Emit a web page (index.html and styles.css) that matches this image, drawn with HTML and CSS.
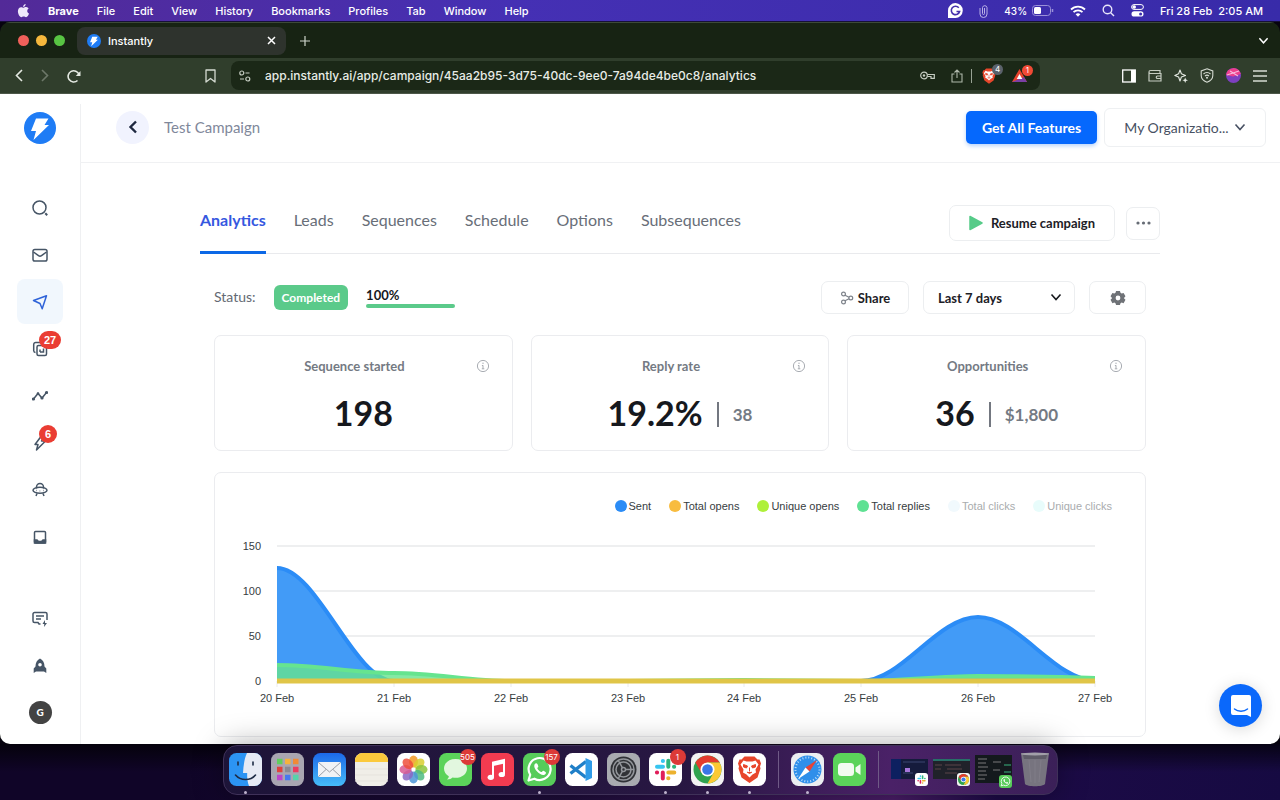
FILE: index.html
```html
<!DOCTYPE html>
<html lang="en">
<head>
  <meta charset="UTF-8">
  <meta name="viewport" content="width=device-width, initial-scale=1.0">
  <title>Instantly</title>
  <link rel="stylesheet" href="styles.css">
</head>
<body>

<!-- Shared icons -->
<svg class="defs" aria-hidden="true">
  <symbol id="bolt" viewBox="0 0 32 32">
    <circle cx="16" cy="16" r="16" fill="#1f7cf5"/>
    <path d="M12 6.500h12.500l-4 6.500h4.500L9.500 28l2.500-9H7z" fill="#fff"/>
  </symbol>
  <symbol id="info" viewBox="0 0 14 14">
    <g fill="none" stroke="#a9adb3"><circle cx="7" cy="7" r="5.600"/><path d="M7 6.300v3.500M5.900 6.500H7M5.800 9.800h2.500"/></g>
    <circle cx="7" cy="4.300" r=".7" fill="#a9adb3"/>
  </symbol>
  <symbol id="chevron" viewBox="0 0 12 12">
    <path d="M1.500 3.500 6 8.500l4.500-5" fill="none" stroke="currentColor" stroke-width="1.600"/>
  </symbol>
  <symbol id="slack" viewBox="0 0 33 33">
    <rect width="33" height="33" rx="7.500" fill="#fff"/>
    <g stroke-width="4" stroke-linecap="round" fill="none">
      <path d="M8 13.800h6M13.800 8h.2" stroke="#37c5f0"/>
      <path d="M19.300 7.800v6M25 13.800h.2" stroke="#2fb67c"/>
      <path d="M19.300 19.500h6M19.200 25.300h.2" stroke="#ecb22e"/>
      <path d="M13.800 19.500v6M7.900 19.500h.2" stroke="#e01e5a"/>
    </g>
  </symbol>
  <symbol id="chrome" viewBox="0 0 33 33">
    <rect width="33" height="33" rx="7.500" fill="#f3f3f3"/>
    <circle cx="16.500" cy="16.500" r="14" fill="#2fa34f"/>
    <path d="M4.400 9.500A14 14 0 0 1 28.600 9.500H16.500l-6 10.500z" fill="#e33b2e"/>
    <path d="M28.600 9.500A14 14 0 0 1 16.500 30.500l6-10.500-6-10.500z" fill="#fcc934"/>
    <circle cx="16.500" cy="16.500" r="7" fill="#fff"/><circle cx="16.500" cy="16.500" r="5.300" fill="#3a76e8"/>
  </symbol>
  <symbol id="whatsapp" viewBox="0 0 33 33">
    <rect width="33" height="33" rx="7.500" fill="#57cc5a"/>
    <path d="M5.500 27.500l1.700-5.800a11 11 0 1 1 4.200 4z" fill="none" stroke="#fff" stroke-width="2.200" stroke-linejoin="round"/>
    <path d="M12.500 10.500c-2 1.200-1.600 4.600 1.600 8s6.800 4.600 8.600 2.200c.8-1.300 0-1.700-2.300-2.900-.9-.3-1.300 1.500-2.200 1.300-1.600-.7-3.200-2.200-3.900-3.800-.2-.8 1.300-1.100 1-2.100-.9-2.500-1.300-3.200-2.800-2.700z" fill="#fff"/>
  </symbol>
  <symbol id="lion" viewBox="0 0 24 28">
    <path d="M7 1h10l3 3h2l1.500 4-1 3 .5 2-3 9L12 27.500 4 22 1 13l.5-2-1-3L2 4h2z" fill="#e8462b"/>
    <path d="M6 5l3 1h6l3-1 3 4-3 5 .5 3-3.500 2-3 3-3-3-3.500-2L6 14 3 9z" fill="#fff"/>
    <path d="M6 9l4 1.500-1 2-3-1zM18 9l-4 1.500 1 2 3-1zM12 12v4M9.500 16.500l2.500 1.500 2.500-1.500" fill="#e8462b" stroke="#e8462b"/>
  </symbol>
</svg>

<header class="menubar">
  <nav class="menus">
    <svg class="apple" viewBox="0 0 14 16"><path d="M9.500 0c.1 1.800-1.300 3.300-2.900 3.300C6.400 1.700 8 .2 9.500 0zM7 4.300c.8 0 1.700-.9 3.200-.8 1.200.1 2.100.6 2.700 1.500-2.400 1.500-2 4.800.5 5.800-.7 1.900-2 4.200-3.500 4.200-1 0-1.500-.7-2.700-.7s-1.700.7-2.700.7C2.600 15 .6 11.500.6 8.400c0-3 1.800-4.800 3.700-4.800 1.200 0 2 .7 2.700.7z" fill="#eee9fa"/></svg>
    <b>Brave</b>
    <span>File</span><span>Edit</span><span>View</span><span>History</span><span>Bookmarks</span><span>Profiles</span><span>Tab</span><span>Window</span><span>Help</span>
  </nav>
  <div class="tray">
    <svg width="15" height="15" viewBox="0 0 15 15"><path d="M7.500 0A7.500 7.500 0 1 1 7 15H0V7.500A7.500 7.500 0 0 1 7.500 0z" fill="#fff"/><path d="M10.800 4.800a4.200 4.200 0 1 0 .8 3.700H8.500" fill="none" stroke="#4530ab" stroke-width="1.600"/></svg>
    <svg width="9" height="14" viewBox="0 0 9 14"><path d="M5.500 4v5.500a1 1 0 0 1-2 0V3.500a2.300 2.300 0 0 1 4.500 0V10a3.500 3.500 0 0 1-7 0V4" fill="none" stroke="#b9b1e6"/></svg>
    <span class="battery">43%
      <svg width="22" height="11" viewBox="0 0 22 11"><rect x=".5" y=".5" width="18" height="10" rx="3" fill="none" stroke="#9a90d8"/><rect x="2" y="2" width="7" height="7" rx="1.500" fill="#fff"/><path d="M20.500 4v3" stroke="#9a90d8" stroke-width="1.500"/></svg>
    </span>
    <svg width="16" height="12" viewBox="0 0 16 12"><g fill="none" stroke="#fff" stroke-width="1.800"><path d="M1 4.500a10 10 0 0 1 14 0M3.500 7.200a6.400 6.400 0 0 1 9 0"/></g><path d="M5.600 9.300a3.500 3.500 0 0 1 4.800 0L8 11.800z" fill="#fff"/></svg>
    <svg width="13" height="13" viewBox="0 0 13 13"><g fill="none" stroke="#e9e6fa" stroke-width="1.400"><circle cx="5.500" cy="5.500" r="4.300"/><path d="M8.700 8.700 12 12"/></g></svg>
    <svg width="13" height="13" viewBox="0 0 13 13"><rect x=".6" y=".6" width="11.800" height="4.800" rx="2.400" fill="none" stroke="#fff"/><circle cx="3.200" cy="3" r="1.800" fill="#fff"/><rect x=".5" y="7.200" width="12" height="5.400" rx="2.700" fill="#fff"/><circle cx="9.600" cy="9.900" r="1.500" fill="#3b2cae"/></svg>
    <time>Fri 28 Feb&nbsp; 2:05 AM</time>
  </div>
</header>

<div class="window">
  <div class="tabstrip">
    <span class="light red"></span><span class="light yellow"></span><span class="light green"></span>
    <div class="tab">
      <svg width="14" height="14"><use href="#bolt"/></svg>
      <span>Instantly</span>
      <button aria-label="Close tab"><svg width="9" height="9" viewBox="0 0 9 9"><path d="M1 1l7 7M8 1 1 8" stroke="#fff" stroke-width="1.500"/></svg></button>
    </div>
    <button class="newtab" aria-label="New tab"><svg width="10" height="10" viewBox="0 0 10 10"><path d="M5 0v10M0 5h10" stroke="#cfd5cc" stroke-width="1.200"/></svg></button>
    <button class="tablist" aria-label="Search tabs"><svg width="11" height="11"><use href="#chevron"/></svg></button>
  </div>

  <div class="toolbar">
    <div class="history">
      <button aria-label="Back"><svg width="8" height="13" viewBox="0 0 8 13"><path d="M7 1 1.500 6.500 7 12" fill="none" stroke="#e4e9e2" stroke-width="1.600"/></svg></button>
      <button aria-label="Forward"><svg width="8" height="13" viewBox="0 0 8 13"><path d="M1 1l5.500 5.500L1 12" fill="none" stroke="#6d7869" stroke-width="1.600"/></svg></button>
      <button aria-label="Reload"><svg width="15" height="14" viewBox="0 0 15 14"><path d="M10.500 11.500A5.600 5.600 0 1 1 12 5.500" fill="none" stroke="#e4e9e2" stroke-width="1.600"/><path d="M13.500 2v5H8.800z" fill="#e4e9e2"/></svg></button>
    </div>
    <button class="bookmark" aria-label="Bookmark"><svg width="11" height="14" viewBox="0 0 11 14"><path d="M1 1h9v12L5.500 9.500 1 13z" fill="none" stroke="#d5dbd2" stroke-width="1.300" stroke-linejoin="round"/></svg></button>
    <div class="address">
      <svg width="12" height="12" viewBox="0 0 12 12"><g fill="none" stroke="#c5ccc1" stroke-width="1.200"><circle cx="2.800" cy="3" r="2"/><path d="M6.500 3h4M1 9h4"/><circle cx="8.800" cy="9" r="2"/></g></svg>
      <input type="text" aria-label="Address" value="app.instantly.ai/app/campaign/45aa2b95-3d75-40dc-9ee0-7a94de4be0c8/analytics">
      <svg width="15" height="9" viewBox="0 0 15 9"><g fill="none" stroke="#c5ccc1" stroke-width="1.200"><circle cx="4" cy="4.500" r="3.300"/><path d="M7.300 3.500h7v3.800H11V5.500H7.500"/></g><circle cx="4" cy="4.500" r="1.200" fill="#c5ccc1"/></svg>
      <svg class="share-page" width="12" height="14" viewBox="0 0 12 14"><path d="M3.500 5H1v8h10V5H8.500M6 9V1M3.500 3.500 6 1l2.500 2.500" fill="none" stroke="#aeb7aa" stroke-width="1.100"/></svg>
      <i class="bar"></i>
      <button class="ext" aria-label="Shields"><svg width="14" height="16"><use href="#lion"/></svg><span class="ext-count grey">4</span></button>
      <button class="ext" aria-label="Rewards"><svg width="15" height="13" viewBox="0 0 15 13"><path d="M7.500 0 15 13H0z" fill="#e8432d"/><path d="M0 13h15l-3-5z" fill="#7a3fa5"/><path d="M7.500 5l2.800 5H4.700z" fill="#fff"/></svg><span class="ext-count">1</span></button>
    </div>
    <div class="tools">
      <svg width="14" height="14" viewBox="0 0 14 14"><rect x=".7" y="1" width="12.600" height="12" fill="none" stroke="#fff" stroke-width="1.300"/><path d="M9 1h4v12H9z" fill="#fff"/></svg>
      <svg width="14" height="14" viewBox="0 0 14 14"><g fill="none" stroke="#c5ccc1" stroke-width="1.200"><path d="M12 4V1.500H2.500a1.500 1.500 0 0 0 0 3H13V12H1V3"/><path d="M13 7H9.500a1.200 1.200 0 0 0 0 2.500H13"/></g></svg>
      <svg width="14" height="14" viewBox="0 0 14 14"><path d="M6 1l1.400 3.800L11.500 6.500 7.400 8 6 12 4.600 8 .8 6.500l3.800-1.700z" fill="none" stroke="#e4e9e2" stroke-width="1.100" stroke-linejoin="round"/><path d="M11.200 8.500l.8 2 2 .8-2 .7-.8 2-.8-2-2-.7 2-.8z" fill="#e4e9e2"/></svg>
      <svg width="14" height="15" viewBox="0 0 14 15"><g fill="none" stroke="#d5dbd2" stroke-width="1.100"><path d="M7 .8 12.800 3v4.500c0 3-2.500 5.500-5.800 6.700C3.700 13 1.200 10.500 1.200 7.500V3z"/><path d="M3.500 6a5 5 0 0 1 7 0M5 8a3 3 0 0 1 4 0"/></g><circle cx="7" cy="9.800" r="1" fill="#d5dbd2"/></svg>
      <svg width="15" height="15" viewBox="0 0 15 15"><circle cx="7.500" cy="7.500" r="7.500" fill="#7d3fc0"/><path d="M0 7a7.500 7.500 0 0 1 14.800-1L7 8.500z" fill="#ec3f8c"/><path d="M1 7l12-4M4 3l8 5" stroke="#f7b6dc" stroke-width="1.200"/></svg>
      <svg width="14" height="12" viewBox="0 0 14 12"><path d="M0 1h14M0 6h14M0 11h14" stroke="#d5dbd2" stroke-width="1.300"/></svg>
    </div>
  </div>

  <div class="page">
    <aside class="sidebar">
      <a class="logo" href="#" aria-label="Instantly"><svg viewBox="0 0 32 32"><use href="#bolt"/></svg></a>
      <a href="#" aria-label="Search"><svg viewBox="0 0 16 16"><circle cx="7.500" cy="7.500" r="6.500"/><path d="M13.300 13.300l1.900 1.900" stroke-width="2"/></svg></a>
      <a href="#" aria-label="Accounts"><svg viewBox="0 0 16 16"><rect x="1" y="2.500" width="14" height="11.500" rx="1.800"/><path d="M1.500 5l5 3.700a2.500 2.500 0 0 0 3 0l5-3.700"/></svg></a>
      <a class="current" href="#" aria-label="Campaigns"><svg viewBox="0 0 16 16"><path d="M1.500 6.500 14.500 1.800 10.200 14.800 8 9.500z" stroke-linejoin="round"/></svg></a>
      <a href="#" aria-label="Inbox"><svg viewBox="0 0 16 16"><path d="M3.500 11.500A2 2 0 0 1 1.700 9.700V3.500a2 2 0 0 1 2-2H10a2 2 0 0 1 2 2"/><rect x="5" y="4.500" width="9.500" height="10" rx="1.500"/><path d="M8 11V8.500M11.500 7.500V11H8"/></svg><span class="count">27</span></a>
      <a href="#" aria-label="Analytics"><svg viewBox="0 0 16 16"><path d="M1.500 11 6 5.500l4 4.500 4.500-5.500"/><g class="solid" stroke="none"><circle cx="1.500" cy="11" r="1.600"/><circle cx="6" cy="5.500" r="1.300"/><circle cx="10" cy="10" r="1.600"/><circle cx="14.500" cy="4.500" r="1.600"/></g></svg></a>
      <a href="#" aria-label="Accelerator"><svg viewBox="0 0 16 16"><path d="M9 1.500 3 9.500h3L4.500 15l9-9H9.500L12 1.500z" stroke-linejoin="round"/></svg><span class="count">6</span></a>
      <a href="#" aria-label="Copilot"><svg viewBox="0 0 16 16"><path d="M4.500 6.500V5a3.500 3.500 0 0 1 7 0v1.500"/><ellipse cx="8" cy="8.300" rx="7" ry="3"/><path d="M5 11.500 4 14M11 11.500l1 2.500M4.500 8.500h.5M7.700 9h.5M11 8.500h.5"/></svg></a>
      <a href="#" aria-label="Templates"><svg viewBox="0 0 16 16"><rect x="2.500" y="2.500" width="11" height="11.500" rx="1"/><path class="solid" d="M2.500 11H5l1.500 1.500h3L11 11h2.500v3h-11z"/></svg></a>
      <a class="lower" href="#" aria-label="Feedback"><svg viewBox="0 0 16 16"><path d="M8.500 13H7l-1-1.500H2.500a1.500 1.500 0 0 1-1.500-1.500V3a1.500 1.500 0 0 1 1.500-1.500h11A1.500 1.500 0 0 1 15 3v6M4 5h8M4 8h5"/><path class="solid" d="M13 9l-2.500 4h1.800L12 16l3-4h-2z" stroke="none"/></svg></a>
      <a href="#" aria-label="Getting started"><svg viewBox="0 0 16 16"><path class="solid" fill-rule="evenodd" stroke="none" d="M8 .5c3.200 1.700 4.500 4.500 4.500 8l1.800 2v4.500l-2.300-1.500H4L1.700 15v-4.500l1.800-2C3.500 5 4.800 2.200 8 .5zM8 5a1.800 1.800 0 1 0 0 3.600A1.800 1.800 0 0 0 8 5z"/></svg></a>
      <a href="#" aria-label="Profile"><span class="avatar">G</span></a>
    </aside>

    <main>
      <div class="topbar">
        <button class="back" aria-label="Back to campaigns"><svg width="10" height="14" viewBox="0 0 10 14"><path d="M8 1.500 2.500 7 8 12.500" fill="none" stroke="#1f2940" stroke-width="2.400"/></svg></button>
        <span class="crumb">Test Campaign</span>
        <button class="upgrade">Get All Features</button>
        <button class="org">My Organizatio... <svg width="12" height="12"><use href="#chevron"/></svg></button>
      </div>

      <div class="content">
        <div class="tabs">
          <a class="active" href="#">Analytics</a>
          <a href="#">Leads</a>
          <a href="#">Sequences</a>
          <a href="#">Schedule</a>
          <a href="#">Options</a>
          <a href="#">Subsequences</a>
          <div class="tab-actions">
            <button class="resume"><svg width="14" height="16" viewBox="0 0 14 16"><path d="M1 1.500 13 8 1 14.500z" fill="#56cb88" stroke="#56cb88" stroke-width="1.500" stroke-linejoin="round"/></svg>Resume campaign</button>
            <button class="more" aria-label="More"><svg width="15" height="4" viewBox="0 0 15 4"><g fill="#666c75"><circle cx="2" cy="2" r="1.600"/><circle cx="7.500" cy="2" r="1.600"/><circle cx="13" cy="2" r="1.600"/></g></svg></button>
          </div>
        </div>

        <div class="panel">
          <div class="status">
            <span class="status-label">Status:</span>
            <span class="pill">Completed</span>
            <div class="progress"><b>100%</b><span></span></div>
            <div class="filters">
              <button class="share"><svg width="14" height="14" viewBox="0 0 14 14"><g fill="none" stroke="#7d828a" stroke-width="1.200"><circle cx="3.500" cy="3" r="1.900"/><circle cx="3.500" cy="11" r="1.900"/><circle cx="10.800" cy="7" r="1.900"/><path d="M5 4.300 9 6.300M5 9.800l4-2"/></g></svg>Share</button>
              <div class="range">
                <select aria-label="Date range"><option>Last 7 days</option><option>Last 4 weeks</option></select>
                <svg width="12" height="12"><use href="#chevron"/></svg>
              </div>
              <button class="settings" aria-label="Settings"><svg width="16" height="16" viewBox="0 0 18 18"><path fill="#6f7277" fill-rule="evenodd" d="M6.800 1h4.400l.6 2.200 1.300.7 2.200-.6 2.100 3.700-1.500 1.600v1l1.500 1.500-2.100 3.700-2.200-.6-1.300.7-.6 2.100H6.800l-.6-2.100-1.300-.7-2.200.6-2.100-3.700 1.500-1.500v-1L.6 7l2.100-3.700 2.200.6 1.300-.7zM9 6.300a2.700 2.700 0 1 0 0 5.400 2.700 2.700 0 0 0 0-5.400z"/></svg></button>
            </div>
          </div>

          <div class="stats">
            <section class="card">
              <h3>Sequence started</h3><svg class="info"><use href="#info"/></svg>
              <p><strong>198</strong></p>
            </section>
            <section class="card">
              <h3>Reply rate</h3><svg class="info"><use href="#info"/></svg>
              <p><strong>19.2%</strong><i></i><span>38</span></p>
            </section>
            <section class="card">
              <h3>Opportunities</h3><svg class="info"><use href="#info"/></svg>
              <p><strong>36</strong><i></i><span>$1,800</span></p>
            </section>
          </div>

          <section class="card chart">
            <ul class="legend">
              <li class="sent">Sent</li>
              <li class="opens">Total opens</li>
              <li class="unique">Unique opens</li>
              <li class="replies">Total replies</li>
              <li class="off clicks">Total clicks</li>
              <li class="off uclicks">Unique clicks</li>
            </ul>
            <svg class="plot" viewBox="0 0 930 190" role="img" aria-label="Campaign activity by day">
              <g stroke="#e9eaec" stroke-width="1.500">
                <path d="M62 26h818M62 71h818M62 116h818"/>
                <path d="M62 161v6M179 161v6M296 161v6M413 161v6M529 161v6M646 161v6M763 161v6M880 161v6" stroke-width="1"/>
              </g>
              <clipPath id="area"><path d="M62 0h818v164H62z"/></clipPath>
              <g clip-path="url(#area)" stroke-width="4">
                <path d="M60 48H62C102 48 139 161 179 161H646C687 161 722 97 763 97S839 161 882 161V163H60z" fill="#429bf7"/>
                <path d="M60 48H62C102 48 139 161 179 161H646C687 161 722 97 763 97S839 161 882 161" fill="none" stroke="#2b8cf6"/>
                <path d="M60 145H62C103 145 138 153 179 153S255 161 296 161H413L529 160 646 161C687 161 722 156 763 156S839 157 882 158V163H60z" fill="#66e48f" fill-opacity=".8"/>
                <path d="M60 145H62C103 145 138 153 179 153S255 161 296 161H413L529 160 646 161C687 161 722 156 763 156S839 157 882 158" fill="none" stroke="#66e48f"/>
                <path d="M60 161h822" stroke="#e0c548" stroke-width="5"/>
              </g>
              <g class="axis" text-anchor="end"><text x="46" y="30">150</text><text x="46" y="75">100</text><text x="46" y="120">50</text><text x="46" y="165">0</text></g>
              <g class="axis" text-anchor="middle">
                <text x="62" y="182">20 Feb</text><text x="179" y="182">21 Feb</text><text x="296" y="182">22 Feb</text><text x="413" y="182">23 Feb</text>
                <text x="529" y="182">24 Feb</text><text x="646" y="182">25 Feb</text><text x="763" y="182">26 Feb</text><text x="880" y="182">27 Feb</text>
              </g>
            </svg>
          </section>
        </div>
      </div>
    </main>
    <button class="chat" aria-label="Open chat"><svg width="20" height="22" viewBox="0 0 20 22"><path d="M2 0h16a2 2 0 0 1 2 2v20l-4-2H2a2 2 0 0 1-2-2V2a2 2 0 0 1 2-2z" fill="#fff"/><path d="M3.500 14c3.500 3 9.500 3 13 0" fill="none" stroke="#0a68fb" stroke-width="1.500" stroke-linecap="round"/></svg></button>
  </div>
</div>

<footer class="desktop">
  <div class="dock">
    <div class="app open"><svg viewBox="0 0 33 33"><rect width="33" height="33" rx="7.500" fill="#2c94f3"/><path d="M18 0h7.500A7.500 7.500 0 0 1 33 7.500v18a7.500 7.500 0 0 1-7.500 7.500H20c-1.500-4-2-8-1.800-13H14C14.500 12 15.500 5 18 0z" fill="#e6eaf4"/><path d="M9 9v3M24 9v3M6.500 22c5 6 15 6 20 0" fill="none" stroke="#1d2b45" stroke-width="1.600" stroke-linecap="round"/></svg></div>
    <div class="app"><svg viewBox="0 0 33 33"><rect width="33" height="33" rx="7.500" fill="#a9a6b1"/><g stroke-width="5.500"><path d="M6 8.500h5.500" stroke="#61cf5d"/><path d="M14 8.500h5.500" stroke="#f4b33e"/><path d="M22 8.500h5.500" stroke="#f08a35"/><path d="M6 16.500h5.500" stroke="#e0423c"/><path d="M14 16.500h5.500" stroke="#8b8993"/><path d="M22 16.500h5.500" stroke="#ed3b60"/><path d="M6 24.500h5.500" stroke="#bd45c9"/><path d="M14 24.500h5.500" stroke="#4779ee"/><path d="M22 24.500h5.500" stroke="#56d3aa"/></g></svg></div>
    <div class="app"><svg viewBox="0 0 33 33"><defs><linearGradient id="mail" x2="0" y2="1"><stop stop-color="#1c69ea"/><stop offset="1" stop-color="#46bcf8"/></linearGradient></defs><rect width="33" height="33" rx="7.500" fill="url(#mail)"/><rect x="5" y="9" width="23" height="15" rx="1.500" fill="#f0f2f5"/><path d="M5.500 9.500 16.500 19l11-9.500M5.500 23.500l7.500-7M27.500 23.500l-7.500-7" fill="none" stroke="#9a9fa8"/></svg></div>
    <div class="app"><svg viewBox="0 0 33 33"><rect width="33" height="33" rx="7.500" fill="#f0eee8"/><path d="M0 9V7.500A7.500 7.500 0 0 1 7.500 0h18A7.500 7.500 0 0 1 33 7.500V9z" fill="#fbc93c"/><path d="M0 16h33M0 22h33M0 28h33" stroke="#e6e3dd"/></svg></div>
    <div class="app"><svg viewBox="0 0 33 33"><rect width="33" height="33" rx="7.500" fill="#fff"/><g fill-opacity=".85"><ellipse cx="16.500" cy="8.500" rx="4.500" ry="6" fill="#f59a23"/><ellipse cx="16.500" cy="8.500" rx="4.500" ry="6" fill="#d8cf2f" transform="rotate(45 16.500 16.500)"/><ellipse cx="16.500" cy="8.500" rx="4.500" ry="6" fill="#8cc63e" transform="rotate(90 16.500 16.500)"/><ellipse cx="16.500" cy="8.500" rx="4.500" ry="6" fill="#4dbb83" transform="rotate(135 16.500 16.500)"/><ellipse cx="16.500" cy="8.500" rx="4.500" ry="6" fill="#4c95d8" transform="rotate(180 16.500 16.500)"/><ellipse cx="16.500" cy="8.500" rx="4.500" ry="6" fill="#8a67c4" transform="rotate(225 16.500 16.500)"/><ellipse cx="16.500" cy="8.500" rx="4.500" ry="6" fill="#d75a93" transform="rotate(270 16.500 16.500)"/><ellipse cx="16.500" cy="8.500" rx="4.500" ry="6" fill="#ee4f3c" transform="rotate(315 16.500 16.500)"/></g></svg></div>
    <div class="app"><svg viewBox="0 0 33 33"><rect width="33" height="33" rx="7.500" fill="#5bd35a"/><path d="M16.500 6C10 6 5 10 5 15.500c0 3.300 1.800 6 4.800 7.700 0 1.300-.8 2.300-1.800 3.300 2.500 0 4.500-1 5.500-2 7.500 1.500 14.500-2.500 14.500-9C28 10 23 6 16.500 6z" fill="#e2f7df"/></svg><span class="app-count">505</span></div>
    <div class="app"><svg viewBox="0 0 33 33"><rect width="33" height="33" rx="7.500" fill="#f23b50"/><path d="M12 24V9.500L23 7v14" fill="none" stroke="#fff" stroke-width="2"/><path d="M12 11.500 23 9" stroke="#fff" stroke-width="3"/><ellipse cx="9.800" cy="24.300" rx="3.200" ry="2.600" fill="#fff"/><ellipse cx="20.800" cy="21.500" rx="3.200" ry="2.600" fill="#fff"/></svg></div>
    <div class="app open"><svg><use href="#whatsapp"/></svg><span class="app-count">157</span></div>
    <div class="app"><svg viewBox="0 0 33 33"><rect width="33" height="33" rx="7.500" fill="#fff"/><path d="M5.500 12.500 21 24.500M5.500 20.500 21 8.500" stroke="#1f7fc8" stroke-width="3.400"/><path d="M20.500 5 27 8v17l-6.500 3z" fill="#2f9be8"/></svg></div>
    <div class="app"><svg viewBox="0 0 33 33"><rect width="33" height="33" rx="7.500" fill="#a9abb0"/><circle cx="16.500" cy="16.500" r="13" fill="#303236"/><g fill="none" stroke="#93969b" stroke-width="1.500"><circle cx="16.500" cy="16.500" r="10.500"/><circle cx="16.500" cy="16.500" r="7.500"/><circle cx="16.500" cy="16.500" r="2"/><path d="M18.500 16.500H27M15.500 14.800 11.300 7.500M15.500 18.200l-4.200 7.300"/></g></svg></div>
    <div class="app open"><svg><use href="#slack"/></svg><span class="app-count">1</span></div>
    <div class="app open"><svg><use href="#chrome"/></svg></div>
    <div class="app open"><svg viewBox="0 0 33 33"><rect width="33" height="33" rx="7.500" fill="#fff"/><use href="#lion" x="4" y="2.500" width="25" height="28"/></svg></div>
    <i class="divider"></i>
    <div class="app open"><svg viewBox="0 0 33 33"><rect width="33" height="33" rx="7.500" fill="#eceef1"/><circle cx="16.500" cy="16.500" r="14" fill="#2f8fea"/><circle cx="16.500" cy="16.500" r="12" fill="none" stroke="#b9dcfa" stroke-width="2" stroke-dasharray="1 2"/><path d="M26 7 18.500 18.500 14.500 14.500z" fill="#e84336"/><path d="M7 26l7.500-11.500 4 4z" fill="#fff"/></svg></div>
    <div class="app"><svg viewBox="0 0 33 33"><rect width="33" height="33" rx="7.500" fill="#5bd35a"/><rect x="5" y="10" width="16" height="13" rx="3.500" fill="#f2fbf1"/><path d="M22.500 14.500 27.500 11v11l-5-3.500z" fill="#f2fbf1"/></svg></div>
    <i class="divider"></i>
    <div class="thumb"><svg viewBox="0 0 37 24"><path d="M0 2h37v20H0z" fill="#151b3c"/><path d="M0 2h10v20H0z" fill="#0d2060"/><path d="M12 5h22M12 16h10" stroke="#3d4670"/><path d="M14 11h5v4h-5z" fill="#a876db"/></svg><svg class="mini"><use href="#slack"/></svg></div>
    <div class="thumb"><svg viewBox="0 0 37 24"><path d="M0 2h37v20H0z" fill="#20222a"/><path d="M0 3h37" stroke="#287068" stroke-width="2"/><path d="M2 8h7M2 12h6M12 8h16M14 12h15M12 16h12" stroke="#5a4548"/></svg><svg class="mini"><use href="#chrome"/></svg></div>
    <div class="thumb"><svg viewBox="0 0 37 28"><path d="M0 0h37v28H0z" fill="#14191d"/><path d="M3 4h9M3 8h8M3 12h10M3 16h8M3 20h9M3 24h7M18 7h8M18 15h7" stroke="#78797a"/><path d="M29 10h7M29 17h7" stroke="#26664d" stroke-width="2"/></svg><svg class="mini"><use href="#whatsapp"/></svg></div>
    <svg class="trash" viewBox="0 0 28 35"><path d="M0 1h28l-4 31c-2 3-18 3-20 0z" fill="#77747f"/><path d="M2 3h24l-1 4H3z" fill="#5f5c68"/><path d="M8 8l2 22M20 8l-2 22M14 8v23" stroke="#807d88"/><ellipse cx="14" cy="2" rx="14" ry="1.500" fill="#a29fa9"/></svg>
  </div>
</footer>

</body>
</html>
```
FILE: styles.css
```css
* {
  box-sizing: border-box;
}
body {
  margin: 0;
  height: 100vh;
  display: flex;
  flex-direction: column;
  overflow: hidden;
  background: #07030f;
  font-family: Lato, sans-serif;
  color: #16181d;
}
button {
  font: inherit;
  color: inherit;
  background: none;
  border: 0;
  padding: 0;
  display: flex;
  align-items: center;
  justify-content: center;
}
a {
  text-decoration: none;
}
svg {
  flex: none;
  display: block;
}
.defs {
  position: absolute;
  width: 0;
  height: 0;
}

/* macOS menu bar */
.menubar {
  height: 22px;
  flex: none;
  display: flex;
  align-items: center;
  justify-content: space-between;
  padding: 0 17px 0;
  background: linear-gradient(90deg, #532a98, #4530b4 40%, #382ba9);
  border-bottom: 1px solid #171038;
  color: #fff;
  font: 500 11px/18px Inter, sans-serif;
}
.menus {
  display: flex;
  align-items: center;
  gap: 18px;
}
.apple {
  width: 13px;
  height: 14px;
}
.tray {
  display: flex;
  align-items: center;
  gap: 16px;
}
.battery {
  display: flex;
  align-items: center;
  gap: 5px;
  font-size: 10px;
}

/* Browser window */
.window {
  flex: 1;
  min-height: 0;
  display: flex;
  flex-direction: column;
  overflow: hidden;
  border-radius: 10px;
  background: #172313;
  font-family: Inter, sans-serif;
}
.tabstrip {
  height: 36px;
  flex: none;
  display: flex;
  align-items: center;
  gap: 7px;
  padding: 0 11px 0 18px;
  border-top: 1px solid #3d4a39;
  color: #fff;
}
.light {
  width: 11px;
  height: 11px;
  border-radius: 50%;
}
.red { background: #f0605a; }
.yellow { background: #f5b83d; }
.green { background: #58c443; }
.tab {
  width: 209px;
  height: 28px;
  margin-left: 5px;
  padding: 0 10px;
  display: flex;
  align-items: center;
  gap: 7px;
  border-radius: 8px;
  background: #2e332d;
  font-size: 11px;
  font-weight: 500;
}
.tab button {
  margin-left: auto;
}
.newtab {
  margin-left: 7px;
}
.tablist {
  margin-left: auto;
}
.toolbar {
  height: 36px;
  flex: none;
  display: flex;
  align-items: center;
  padding: 0 13px 0 15px;
  background: #303e2c;
  border-bottom: 1px solid #4c5748;
}
.history {
  display: flex;
  gap: 18px;
}
.bookmark {
  margin: 0 15px 0 auto;
}
.address {
  flex: 0 1 809px;
  height: 29px;
  display: flex;
  align-items: center;
  padding: 0 8px;
  border-radius: 8px;
  background: #1b2817;
}
.address input {
  flex: 1;
  min-width: 0;
  margin-left: 14px;
  padding: 0;
  border: 0;
  background: none;
  color: #e8ece6;
  font: 500 12px/18px Inter, sans-serif;
}
.share-page {
  margin-left: 16px;
}
.bar {
  width: 1px;
  height: 14px;
  margin: 0 10px 0 8px;
  background: #98a294;
}
.ext {
  position: relative;
  width: 20px;
  justify-content: flex-start;
}
.ext + .ext {
  margin-left: 10px;
}
.ext-count {
  position: absolute;
  top: -4px;
  right: -1px;
  width: 11px;
  height: 11px;
  border-radius: 6px;
  background: #f04a35;
  color: #fff;
  font-size: 8px;
  line-height: 11px;
  text-align: center;
}
.grey {
  background: #5b626b;
}
.tools {
  display: flex;
  align-items: center;
  gap: 12px;
  margin-left: 82px;
}

/* App shell */
.page {
  flex: 1;
  min-height: 0;
  display: flex;
  position: relative;
  background: #fff;
  font-family: Lato, sans-serif;
}
.sidebar {
  width: 80px;
  flex: none;
  display: flex;
  flex-direction: column;
  align-items: center;
  gap: 2px;
  margin-top: 10px;
  padding: 8px 0 9px;
  box-shadow: 1px 0 #eff0f2;
}
.sidebar a {
  position: relative;
  width: 46px;
  height: 45px;
  display: flex;
  align-items: center;
  justify-content: center;
  border-radius: 8px;
}
.sidebar a svg {
  width: 16px;
  height: 16px;
  fill: none;
  stroke: #465566;
  stroke-width: 1.5;
}
.sidebar a .solid {
  fill: #465566;
}
.sidebar .logo {
  height: 32px;
  margin-bottom: 39px;
}
.sidebar .logo svg {
  width: 32px;
  height: 32px;
  stroke: none;
}
.sidebar .current {
  background: #f1f7fd;
}
.sidebar .current svg {
  stroke: #2f63d8;
}
.sidebar .lower {
  margin-top: auto;
}
.count {
  position: absolute;
  top: 5px;
  left: 22px;
  height: 18px;
  min-width: 18px;
  padding: 0 5px;
  border-radius: 9px;
  background: #ea3d33;
  color: #fff;
  font: bold 11px/18px "Liberation Sans", sans-serif;
  text-align: center;
}
.avatar {
  width: 23px;
  height: 23px;
  border-radius: 50%;
  background: #434343;
  color: #fff;
  font-size: 10px;
  font-weight: 900;
  line-height: 23px;
  text-align: center;
}
main {
  flex: 1;
  min-width: 0;
}
.topbar {
  height: 69px;
  display: flex;
  align-items: center;
  padding: 0 14px 2px 36px;
  border-bottom: 1px solid #f0f1f3;
}
.back {
  width: 33px;
  height: 33px;
  border-radius: 50%;
  background: #f1f3fe;
}
.crumb {
  margin-left: 15px;
  color: #7f889b;
  font-size: 15px;
}
.upgrade {
  width: 131px;
  height: 33px;
  margin-left: auto;
  border-radius: 5px;
  background: #0568fd;
  box-shadow: 0 2px 4px #b7d3fb;
  color: #fff;
  font-size: 14px;
  font-weight: 700;
}
.org {
  width: 162px;
  height: 39px;
  margin-left: 7px;
  gap: 5px;
  border: 1px solid #eef0f2;
  border-radius: 6px;
  color: #485163;
  font-size: 14px;
}
.content {
  max-width: 960px;
  margin: 0 auto;
}
.tabs {
  height: 91px;
  display: flex;
  gap: 28px;
  border-bottom: 1px solid #e9eaed;
}
.tabs a {
  height: 91px;
  padding-top: 45px;
  color: #686e78;
  font-size: 16px;
  line-height: 24px;
}
.tabs .active {
  border-bottom: 3px solid #0c68e6;
  color: #3558e0;
  font-weight: 700;
}
.tab-actions {
  display: flex;
  align-items: center;
  gap: 11px;
  height: 36px;
  margin: 42px 0 0 auto;
}
.tab-actions button,
.filters button,
.range select {
  height: 33px;
  border: 1px solid #eceef0;
  border-radius: 7px;
  background: #fff;
  color: #1d2026;
  font-family: inherit;
  font-size: 13px;
  font-weight: 700;
}
.tab-actions .resume {
  width: 166px;
  height: 36px;
  gap: 8px;
}
.tab-actions .more {
  width: 34px;
}
.panel {
  padding: 27px 14px;
}
.status {
  height: 33px;
  display: flex;
  align-items: center;
}
.status-label {
  padding-bottom: 2px;
  color: #636973;
  font-size: 14px;
}
.pill {
  margin: 0 18px;
  padding: 0 8px;
  border-radius: 6px;
  background: #5bca8a;
  color: #fff;
  font-size: 12px;
  font-weight: 700;
  line-height: 25px;
}
.progress {
  width: 89px;
  font-size: 13px;
  line-height: 17px;
}
.progress span {
  display: block;
  height: 4px;
  border-radius: 2px;
  background: #5bca8a;
}
.filters {
  display: flex;
  gap: 14px;
  margin-left: auto;
}
.filters .share {
  width: 88px;
  gap: 4px;
}
.range {
  position: relative;
  width: 152px;
}
.range select {
  appearance: none;
  width: 100%;
  padding: 0 14px;
}
.range svg {
  position: absolute;
  top: 10px;
  right: 13px;
  pointer-events: none;
}
.filters .settings {
  width: 57px;
}
.stats {
  display: grid;
  grid-template-columns: repeat(3, 1fr);
  gap: 18px;
  margin: 21px 0;
}
.card {
  position: relative;
  height: 116px;
  padding-top: 20px;
  border: 1px solid #ebecef;
  border-radius: 7px;
  text-align: center;
}
.card h3 {
  margin: 0 18px 0 0;
  color: #747a83;
  font-size: 13px;
  line-height: 20px;
}
.info {
  position: absolute;
  top: 23px;
  right: 22px;
  width: 14px;
  height: 14px;
}
.card p {
  height: 46px;
  display: flex;
  align-items: center;
  justify-content: center;
  margin: 14px 0 0;
  line-height: 46px;
}
.card strong {
  font-size: 34px;
}
.card p i {
  width: 2px;
  height: 25px;
  margin: 2px 14px 0;
  background: #737780;
}
.card p span {
  padding-top: 3px;
  color: #747a83;
  font-size: 17px;
  font-weight: 700;
}
.chart {
  height: auto;
  padding: 23px 0 26px;
}
.legend {
  display: flex;
  justify-content: flex-end;
  gap: 18px;
  margin: 0 33px 4px 0;
  padding: 0;
  list-style: none;
  color: #373d3f;
  font: 11px/20px "Liberation Sans", sans-serif;
}
.legend li {
  display: flex;
  align-items: center;
  gap: 2px;
}
.legend li::before {
  content: "";
  width: 12px;
  height: 12px;
  border-radius: 50%;
}
.sent::before { background: #2b8cf6; }
.opens::before { background: #f8bc3f; }
.unique::before { background: #aef03a; }
.replies::before { background: #5fe193; }
.clicks::before { background: #f1f9fd; }
.uclicks::before { background: #e8fcfb; }
.legend .off {
  color: #a9acae;
}
.plot {
  width: 100%;
}
.axis {
  fill: #373d3f;
  font: 11px "Liberation Sans", sans-serif;
}
.chat {
  position: absolute;
  right: 18px;
  bottom: 17px;
  width: 43px;
  height: 43px;
  border-radius: 50%;
  background: #0a68fb;
  box-shadow: 0 2px 16px rgba(0, 0, 0, .15);
}

/* Dock */
.desktop {
  height: 56px;
  flex: none;
  display: flex;
  justify-content: center;
  align-items: flex-start;
  padding-top: 1px;
  background: linear-gradient(180deg, rgba(0, 0, 0, .7), transparent 50%),
    linear-gradient(100deg, #100528 15%, #1e0d3a 45%, #4a1d68 70%, #1d0b47 78%, #160a42);
}
.dock {
  position: relative;
  height: 50px;
  display: flex;
  align-items: center;
  gap: 9px;
  padding: 0 8px 2px 5px;
  border: 1px solid #3f3158;
  border-radius: 14px;
  background: linear-gradient(90deg, #1d1438, #281742 55%, #4a2167 80%, #3b2058);
  box-shadow: 0 0 30px rgba(0, 0, 0, .35);
}
.app {
  position: relative;
}
.app > svg {
  width: 33px;
  height: 33px;
}
.app.open::after {
  content: "";
  position: absolute;
  left: 15px;
  bottom: -8px;
  width: 3px;
  height: 3px;
  border-radius: 50%;
  background: #bfb2cd;
}
.app-count {
  position: absolute;
  top: -4px;
  right: -4px;
  min-width: 16px;
  height: 16px;
  border-radius: 8px;
  background: #dc3a37;
  color: #fff;
  font: 8px/16px Inter, sans-serif;
  text-align: center;
}
.divider {
  width: 1px;
  height: 37px;
  margin: 0 3px;
  background: #6f5a86;
}
.thumb {
  position: relative;
  width: 37px;
  margin-right: -4px;
}
.thumb > svg {
  width: 37px;
}
.thumb .mini {
  position: absolute;
  right: 0;
  bottom: -5px;
  width: 13px;
  height: 13px;
}
.trash {
  width: 28px;
  height: 35px;
  margin-left: 4px;
}
```
